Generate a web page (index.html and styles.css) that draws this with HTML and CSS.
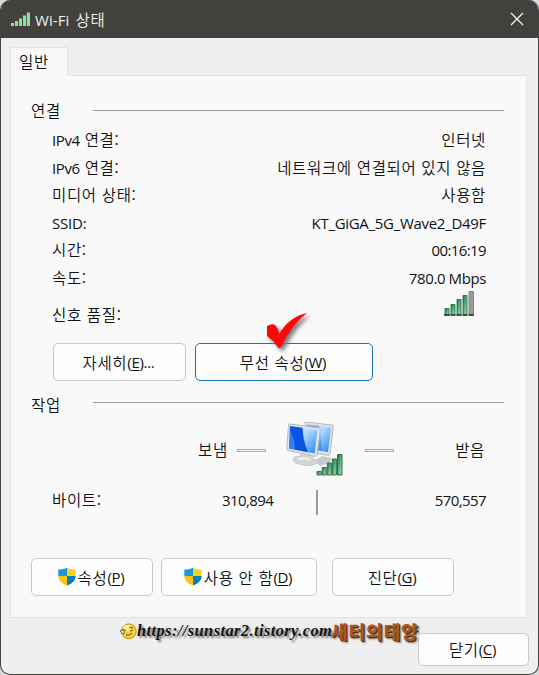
FILE: index.html
```html
<!DOCTYPE html>
<html lang="ko">
<head>
<meta charset="utf-8">
<title>Wi-Fi 상태</title>
<link rel="stylesheet" href="styles.css">
</head>
<body>
<svg class="defs" width="0" height="0" aria-hidden="true">
  <defs>
    <linearGradient id="screen" x1="0" y1="0" x2="1" y2="1"><stop offset="0" stop-color="#e8f7ff"/><stop offset=".45" stop-color="#a9d8ff"/><stop offset="1" stop-color="#2b7ff0"/></linearGradient>
    <linearGradient id="green" x1="0" y1="0" x2="1" y2="1"><stop offset="0" stop-color="#1d7545"/><stop offset="1" stop-color="#a9e0bd"/></linearGradient>
    <symbol id="shield" viewBox="0 0 18 19">
      <path d="M9 .5C7 2 4 2.6.3 2.6V9H9z" fill="#169bd7"/>
      <path d="M9 .5c2 1.500 5 2.100 8.700 2.100V9H9z" fill="#fcd116"/>
      <path d="M.3 9c.2 4.800 3.600 7.700 8.700 9.500V9z" fill="#fcc50c"/>
      <path d="M17.700 9c-.2 4.800-3.600 7.700-8.700 9.500V9z" fill="#087fc0"/>
    </symbol>
  </defs>
</svg>
<div class="window">
  <header class="titlebar">
    <svg class="wifi" width="19" height="14" viewBox="0 0 19 14"><path fill="#8ce0a2" d="M0 11h3v3H0zM4 9h3v5H4zM8 6.500h3V14H8zM12 3.500h3V14h-3zM15.800.5H19V14h-3.200z"/></svg>
    <h1><span class="en">Wi-Fi</span> 상태</h1>
    <svg class="close" width="14" height="14" viewBox="0 0 14 14"><path d="M1 1l12 12M13 1L1 13" stroke="#f6f6f6" stroke-width="1.300"/></svg>
  </header>
  <main class="client">
    <div class="tab">일반</div>
    <section class="panel">
      <div class="group"><span>연결</span><i></i></div>
      <dl class="facts">
        <div><dt><span class="en">IPv4</span> 연결:</dt><dd>인터넷</dd></div>
        <div><dt><span class="en">IPv6</span> 연결:</dt><dd>네트워크에 연결되어 있지 않음</dd></div>
        <div><dt>미디어 상태:</dt><dd>사용함</dd></div>
        <div><dt class="en">SSID:</dt><dd class="en ssid">KT_GiGA_5G_Wave2_D49F</dd></div>
        <div><dt>시간:</dt><dd class="en time">00:16:19</dd></div>
        <div><dt>속도:</dt><dd class="en speed">780.0 Mbps</dd></div>
      </dl>
      <div class="quality">
        <span>신호 품질:</span>
        <svg width="31" height="26" viewBox="0 0 31 26">
          <g fill="url(#green)" stroke="#176b3c" stroke-width=".8"><path d="M1 18.500h4V25H1z"/><path d="M7 14.500h4V25H7z"/><path d="M13 9.500h4V25h-4z"/><path d="M19 5.500h4V25h-4z"/></g>
          <path d="M25 1.500h4.500V25H25z" fill="#9b9999" stroke="#888"/>
          <path d="M0 25h6M6.500 25h5M12.500 25h5M18.500 25h5M24.500 25H30" stroke="#163c29" stroke-width="1.500"/>
        </svg>
      </div>
      <div class="actions">
        <button class="more">자세히<span class="en">(<u>E</u>)...</span></button>
        <button class="wireless">무선 속성<span class="en">(<u>W</u>)</span></button>
      </div>
      <div class="group activity"><span>작업</span><i></i></div>
      <div class="traffic">
        <span class="sent">보냄</span><i class="dash"></i>
        <svg class="pcs" width="58" height="56" viewBox="0 0 58 56">
          <path d="M28 40l8-5 10 2-2 5-10 3z" fill="#c8c9c9"/>
          <path d="M19 1l27 3q1.500.2 1.300 2L44 33q-.2 1.500-2 1.300L22 31z" fill="#dfe1e2" stroke="#b6b9bc"/>
          <path d="M21 3.500l24 2.700L42 31l-20-3z" fill="url(#screen)"/>
          <path d="M21 3.500l12 1.300 3 25-14-2z" fill="#1e6fe8" opacity=".5"/>
          <path d="M15 31l11 1 1 6q6 2 4 4-5 4-14 2-9-1-10-6 1-3 8-3z" fill="#d2d4d5" stroke="#bfc1c2" stroke-width=".7"/>
          <path d="M12 38q8-2 12 1" fill="none" stroke="#f4f4f4" stroke-width="2"/>
          <path d="M4 3l29 4q1.500.3 1.300 2L31 34q-.3 1.600-2 1.300L2 29.500Q.6 29 .8 27.500L2.500 4q.2-1.200 1.500-1z" fill="#e4e6e7" stroke="#b4b7ba"/>
          <path d="M4 5l27.500 4L28.700 32.500 3 27.500z" fill="url(#screen)"/>
          <path d="M4 5l12.500 1.800Q17 20 22 31.200L3 27.500z" fill="#0a55e4"/>
          <path d="M4 10q5 8 5 18.700l-6-1.200z" fill="#4da2f6" opacity=".6"/>
          <g fill="url(#green)" stroke="#2c7548" stroke-width="1"><path d="M31 50.500h4.300V54H31z"/><path d="M36.200 46.500h4V54h-4z"/><path d="M41.300 42h4v12h-4z"/><path d="M46.400 38h4v16h-4z"/><path d="M51.500 33.500h4.500V54h-4.500z"/></g>
        </svg>
        <i class="dash"></i><span class="received">받음</span>
      </div>
      <div class="bytes"><span>바이트:</span><span class="en out">310,894</span><i></i><span class="en in">570,557</span></div>
      <div class="commands">
        <button><svg class="shield"><use href="#shield"/></svg>속성<span class="en">(<u>P</u>)</span></button>
        <button class="disable"><svg class="shield"><use href="#shield"/></svg>사용 안 함<span class="en">(<u>D</u>)</span></button>
        <button>진단<span class="en">(<u>G</u>)</span></button>
      </div>
    </section>
    <footer><button>닫기<span class="en">(<u>C</u>)</span></button></footer>
  </main>
  <svg class="check" width="46" height="44" viewBox="0 0 46 44"><path d="M3 16q5-3 8-1 3 3 4 9Q25 7 43 3 28 14 17 37q-2 3-4-1Q9 30 3 26z" fill="#fb0808"/></svg>
  <div class="watermark">
    <svg width="17" height="17" viewBox="0 0 17 17"><circle cx="8.800" cy="8.300" r="7.400" fill="#f7cf31" stroke="#c98e16"/><ellipse cx="7" cy="5" rx="4" ry="3" fill="#fff19a"/><path d="M3 6l3 1.500M9 5q2-1 4 0M10 8q2 0 3-1M6 12q4 1 6-2" fill="none" stroke="#765113"/><path d="M0 8q2-2 4 0 1 3-1 3z" fill="#e7f2d7" stroke="#526944"/></svg>
    <span class="url">https://sunstar2.tistory.com</span><span class="name">새터의태양</span>
  </div>
</div>
</body>
</html>
```
FILE: styles.css
```css
* { box-sizing: border-box; }
body {
  margin: 0;
  background: #d9d9dc;
  color: #111;
  font: 350 15.5px/24px "Noto Sans CJK KR", sans-serif;
  letter-spacing: .65px;
}
i { font-style: normal; }
.defs { position: absolute; }
.en { font-family: "Open Sans", "Noto Sans", sans-serif; font-size: 15px; font-weight: 380; letter-spacing: -.6px; }
.window {
  position: relative;
  width: 539px;
  height: 675px;
  overflow: hidden;
  border: 1px solid #444340;
  border-top: 0;
  border-radius: 10px;
  background: #efefef;
}
.titlebar {
  display: flex;
  align-items: center;
  height: 38px;
  padding: 0 14px 0 10px;
  background: #42413e;
  color: #f1f1f1;
}
h1 { margin: 0 auto 0 5px; font-size: inherit; font-weight: inherit; }
h1 .en { letter-spacing: .1px; margin-right: 1px; }
.client { padding: 9px 11px 0 9px; }
.tab {
  position: relative;
  width: 58px;
  height: 29px;
  margin-bottom: -1px;
  padding: 1px 8px;
  border: 1px solid #e2e2e2;
  border-bottom: 0;
  background: #f9f9f9;
}
.panel {
  height: 543px;
  padding: 22px 22px 0 20px;
  border: 1px solid #e2e2e2;
  background: #f9f9f9;
}
.group { display: flex; align-items: center; height: 24px; }
.group span { width: 62px; }
.group i { flex: 1; height: 1px; background: #999; }
.facts { margin: 5px 0 0; padding: 0 18px 0 21px; }
.facts div { display: flex; justify-content: space-between; height: 27.500px; }
dt, dd { margin: 0; }
dt.en { letter-spacing: -.2px; }
dt.en, dd.en { padding-top: 1px; }
dd.ssid { letter-spacing: -.3px; }
dd.speed { letter-spacing: -.4px; }
dt .en { letter-spacing: -.4px; }
.quality { display: flex; height: 41px; padding: 0 29px 0 21px; justify-content: space-between; }
.quality span { margin-top: 10px; }
.quality svg { margin-top: -2px; }
button {
  display: flex;
  align-items: center;
  justify-content: center;
  height: 38px;
  width: 122px;
  padding: 0 2px 1px 0;
  border: 1px solid #c9c9c9;
  border-radius: 5px;
  background: #fdfdfd;
  color: inherit;
  font: inherit;
  letter-spacing: inherit;
}
button .en { letter-spacing: -.3px; }
u { text-underline-offset: 2px; }
.actions { display: flex; gap: 9px; margin: 10px 0 0 22px; }
.more { width: 133px; }
.wireless { width: 178px; border-color: #1472ad; }
.activity { margin-top: 11px; }
.activity i { margin-bottom: 4px; }
.traffic { display: flex; height: 56px; margin-top: 5px; }
.traffic span { margin-top: 16px; }
.sent { margin-left: 167px; width: 39px; }
.dash { width: 29px; height: 3px; margin-top: 28px; border: 1px solid #aaa; }
.pcs { margin: 0 21px 0 20px; }
.received { margin-left: auto; margin-right: 19px; }
.bytes { display: flex; height: 28px; margin-top: 10px; padding: 0 18px 0 21px; }
.bytes > :first-child { width: 170px; }
.out { width: 51px; }
.bytes i { width: 2px; height: 25px; margin: 3px 0 0 43px; background: #999; }
.bytes .en { padding-top: 1px; }
.in { margin-left: auto; }
.commands { display: flex; margin-top: 43px; }
.commands button:last-child { margin-left: 15px; }
.commands .disable { width: 156px; margin-left: 8px; }
.shield { width: 18px; height: 19px; margin-right: 2px; }
footer { display: flex; justify-content: flex-end; margin: 15px -2px 0 0; }
footer button { width: 111px; height: 33px; }
.check { position: absolute; left: 263px; top: 310px; filter: drop-shadow(3px 3px 2px #777); }
.watermark {
  position: absolute;
  left: 119px;
  top: 621px;
  display: flex;
  align-items: center;
  height: 20px;
  white-space: nowrap;
}
.url {
  width: 194px;
  font: italic bold 16.500px/20px "Liberation Serif", serif;
  letter-spacing: .38px;
  text-shadow: 2px 2px 2px #777;
}
.name {
  color: #a65824;
  font-weight: 900;
  font-size: 18px;
  letter-spacing: 1px;
  text-shadow: 1px 1px #4c2a15, 2px 2px 2px #777;
}
```
